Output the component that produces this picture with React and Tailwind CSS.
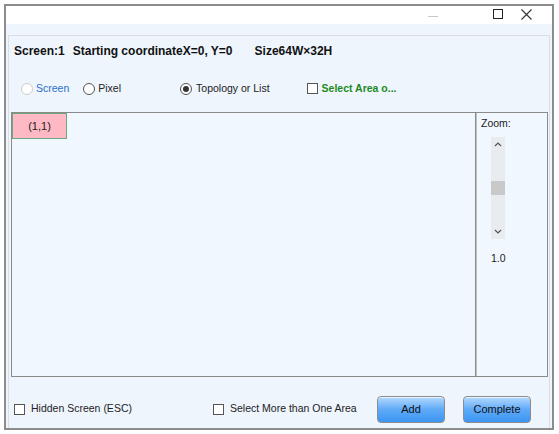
import React from 'react'

const font = { fontFamily: '"Liberation Sans", Arial, sans-serif' }

function Radio({ checked, disabled }) {
  return (
    <span
      className={
        'inline-flex h-[12px] w-[12px] shrink-0 items-center justify-center rounded-full border bg-white ' +
        (disabled ? 'border-[#cfcfcf]' : 'border-[#555]')
      }
    >
      {checked && <span className="h-[6px] w-[6px] rounded-full bg-[#333]" />}
    </span>
  )
}

function Box() {
  return <span className="inline-block h-[11px] w-[11px] shrink-0 border border-[#555] bg-white" />
}

function Btn({ children }) {
  return (
    <button className="flex h-[27px] w-[68px] shrink-0 items-center justify-center rounded-[4px] border border-[#8c8c8c] bg-gradient-to-b from-[#b4d9fd] via-[#5eaaf7] to-[#3b95f3] text-[11px] text-[#111] shadow-[inset_0_1px_0_rgba(255,255,255,0.7)]">
      {children}
    </button>
  )
}

export default function App() {
  return (
    <div className="h-[434px] w-[559px] bg-white p-[4px]" style={font}>
      <div className="flex h-[426px] w-[550px] flex-col border-2 border-[#8c8c8c] bg-[#eef5fd]">
        {/* title bar */}
        <div className="flex h-[18px] items-center justify-end bg-white pb-[2px] text-[#222]">
          <span className="mr-[55px] mt-[4px] h-px w-[10px] bg-[#c8c8c8]" />
          <span className="mr-[18px] h-[10px] w-[10px] border border-[#222]" />
          <svg width="11" height="11" viewBox="0 0 11 11" className="mr-[20px]">
            <path d="M0.5 0.5 L10.5 10.5 M10.5 0.5 L0.5 10.5" stroke="#333" strokeWidth="1.1" />
          </svg>
        </div>
        <div className="mx-[2px] mt-[11px] flex flex-1 flex-col border-x border-t border-[#dadee3]">
          <div className="flex whitespace-nowrap pl-[5px] pt-[7px] text-[12px] font-bold leading-[16px] text-[#111]">
            <span>Screen:1</span>
            <span className="ml-[8px]">Starting coordinateX=0, Y=0</span>
            <span className="ml-[22px]">Size64W×32H</span>
          </div>
          <div className="mt-[22px] flex items-center whitespace-nowrap text-[10.5px] text-[#222]">
            <span className="ml-[12px] flex items-center gap-[3px]">
              <Radio disabled />
              <span className="text-[#2a6fc9]">Screen</span>
            </span>
            <span className="ml-[14px] flex items-center gap-[3px]">
              <Radio />
              <span>Pixel</span>
            </span>
            <span className="ml-[59px] flex items-center gap-[4px]">
              <Radio checked />
              <span>Topology or List</span>
            </span>
            <span className="ml-[37px] flex items-center gap-[4px]">
              <Box />
              <span className="font-bold text-[#1e8a1e]">Select Area o...</span>
            </span>
          </div>
          <div className="ml-[2px] mr-[1px] mt-[15px] flex h-[265px] border border-[#8a8a8a]">
            <div className="flex-1 border-r border-[#8a8a8a] bg-[#f0f7ff]">
              <div className="flex h-[26px] w-[55px] items-center justify-center border border-[#6aa880] bg-[#ffb9c4] text-[11px] text-[#222]">
                (1,1)
              </div>
            </div>
            <div className="flex w-[71px] flex-col border-l border-[#c0c0c0] bg-[#f0f7ff]">
              <span className="ml-[4px] mt-[3px] text-[10.5px] text-[#222]">Zoom:</span>
              <div className="relative ml-[14px] mt-[5px] flex h-[102px] w-[14px] flex-col items-center justify-between bg-[#e9ecef] py-[2px] text-[#555]">
                <svg width="8" height="6" viewBox="0 0 8 6" className="mt-[2px]">
                  <path d="M1 5 L4 2 L7 5" stroke="#555" fill="none" strokeWidth="1.2" />
                </svg>
                <span className="absolute left-0 top-[44px] h-[14px] w-[14px] bg-[#c9c9c9]" />
                <svg width="8" height="6" viewBox="0 0 8 6" className="mb-[2px]">
                  <path d="M1 1 L4 4 L7 1" stroke="#555" fill="none" strokeWidth="1.2" />
                </svg>
              </div>
              <span className="ml-[14px] mt-[12px] text-[10.5px] text-[#222]">1.0</span>
            </div>
          </div>
          <div className="mt-[19px] flex items-center whitespace-nowrap text-[10.5px] text-[#222]">
            <span className="ml-[5px] flex items-center gap-[6px]">
              <Box />
              <span>Hidden Screen (ESC)</span>
            </span>
            <span className="ml-[81px] flex items-center gap-[6px]">
              <Box />
              <span>Select More than One Area</span>
            </span>
            <span className="ml-auto">
              <Btn>Add</Btn>
            </span>
            <span className="ml-[18px] mr-[18px]">
              <Btn>Complete</Btn>
            </span>
          </div>
        </div>
      </div>
    </div>
  )
}
